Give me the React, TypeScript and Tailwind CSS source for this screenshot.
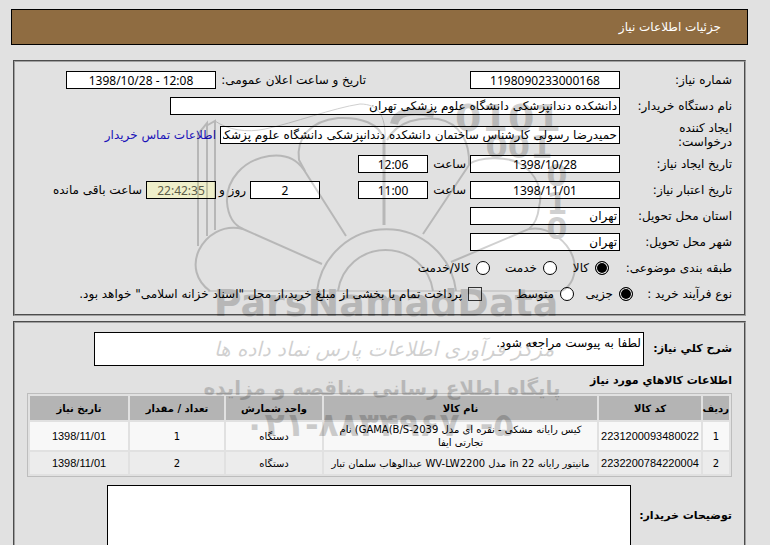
import type { ReactNode } from "react";

type Item = {
	row: string;
	code: string;
	name: string;
	unit: string;
	count: string;
	date: string;
};

const items: Item[] = [
	{
		row: "1",
		code: "2231200093480022",
		// the model number is isolated so its bracket stays on the left side
		name: "کیس رایانه مشکی - نقره ای مدل \u2066GAMA(B/S-2039\u2069) نام تجارتی ایفا",
		unit: "دستگاه",
		count: "1",
		date: "1398/11/01",
	},
	{
		row: "2",
		code: "2232200784220004",
		name: "مانیتور رایانه 22 in مدل WV-LW2200 عبدالوهاب سلمان تبار",
		unit: "دستگاه",
		count: "2",
		date: "1398/11/01",
	},
];

const box = "h-[18px] min-w-0 border border-black bg-white px-0.5 leading-4";
const numberBox = `${box} text-center font-['Noto_Sans','DejaVu_Sans',sans-serif]`;
const radio =
	"h-3.5 w-3.5 shrink-0 appearance-none rounded-full border border-black bg-white checked:bg-black checked:shadow-[inset_0_0_0_1px_white]";
const panel = "rounded-none border-2 border-[#a0a0a0] [border-style:groove]";
const th = "bg-[#b4b4b4] font-bold";

function Row({ label, htmlFor, children }: { label: string; htmlFor?: string; children: ReactNode }) {
	return (
		<div className="flex min-h-[26px] items-center gap-1">
			<label htmlFor={htmlFor} className="w-[108px] shrink-0 leading-[14px]">
				{label}
			</label>
			{children}
		</div>
	);
}

function Watermark() {
	return (
		<svg
			className="pointer-events-none absolute left-0 top-0"
			width="770"
			height="545"
			viewBox="0 0 770 545"
			direction="ltr"
			opacity="0.18"
			aria-hidden="true"
		>
			<g fill="none" stroke="#000" strokeWidth="2">
				<path d="M317 291A70 70 0 0 1 456 291" />
				<path d="M338 291A48 48 0 0 1 433 291" />
				<path d="M322 264L243 229C222 224 206 236 199 250C192 265 196 281 210 291" />
				<path d="M346 236L304 170C296 158 283 154 269 156C243 160 226 180 227 202C228 216 234 225 243 229" />
				<path d="M384 140C380 123 360 117 338 118C310 121 296 138 299 160L305 171" />
				<path d="M384 225V140" strokeWidth="3" />
				<path d="M387 140C398 120 421 117 438 119C460 123 470 142 469 165L423 234" />
				<path d="M469 164C480 157 505 156 519 163C538 174 543 192 539 207C538 217 535 224 529 229L451 262" />
				<path d="M529 229C549 225 570 243 574 261C577 275 571 286 562 291" />
				<path d="M208 291H562" strokeWidth="1" />
				<path d="M198 246V134L207 123V236M215 230V121L206 126" />
				<path d="M215 121C228 130 247 133 265 129C294 123 333 108 360 104C378 104 386 115 385 140" strokeWidth="1" />
				<path d="M394 124C396 113 410 108 434 114" strokeWidth="8" />
			</g>
			<g fill="#000" fontFamily="'DejaVu Sans', sans-serif" fontWeight="700" textAnchor="middle">
				<text x="508" y="131" fontSize="38">0101</text>
				<text x="519" y="158" fontSize="32">001</text>
				<text x="557" y="186" fontSize="30">0</text>
				<text x="557" y="214" fontSize="30">1</text>
				<text x="557" y="239" fontSize="30">0</text>
				<text x="386" y="316" fontSize="38">ParsNamadData</text>
				<text x="384" y="356" fontSize="20" fontWeight="400" fontStyle="italic">
					مرکز فرآوری اطلاعات پارس نماد داده ها
				</text>
				<text x="382" y="395" fontSize="20">
					پایگاه اطلاع رسانی مناقصه و مزایده
				</text>
				<text x="379" y="436" fontSize="33">
					۰۲۱-۸۸۳۴۹۶۷۰-۵
				</text>
			</g>
		</svg>
	);
}

export default function App() {
	return (
		<div
			dir="rtl"
			className="relative h-screen overflow-hidden bg-[#e1e1e1] pl-[11px] pr-[22px] pt-[9px] font-['DejaVu_Sans',sans-serif] text-[12px] leading-[14px] text-black"
		>
			<header className="flex h-9 items-center border border-black bg-[#8f6c41] px-[26px] text-white">
				<h1>جزئیات اطلاعات نیاز</h1>
			</header>

			<main className="px-0.5 pt-[15px]">
				<section className={`${panel} mb-[5px] px-3 pb-[7px] pt-[5px]`}>
					<Row label="شماره نیاز:" htmlFor="need-no">
						<input id="need-no" readOnly dir="ltr" className={`${numberBox} w-[150px]`} value="1198090233000168" />
						<label htmlFor="announce" className="mr-[100px] w-[146px] shrink-0 whitespace-nowrap">
							تاریخ و ساعت اعلان عمومی:
						</label>
						<input id="announce" readOnly dir="ltr" className={`${numberBox} w-[150px]`} value="1398/10/28 - 12:08" />
					</Row>
					<Row label="نام دستگاه خریدار:" htmlFor="buyer">
						<input id="buyer" readOnly className={`${box} w-[450px]`} value="دانشکده دندانپزشکی دانشگاه علوم پزشکی تهران" />
					</Row>
					<div className="py-0.5">
						<Row label="ایجاد کننده درخواست:" htmlFor="creator">
							<input
								id="creator"
								readOnly
								className={`${box} w-[400px]`}
								value="حمیدرضا رسولی کارشناس ساختمان دانشکده دندانپزشکی دانشگاه علوم پزشکی تهران"
							/>
							<a href="#contact" className="whitespace-nowrap text-[#1a12b8]">
								اطلاعات تماس خریدار
							</a>
						</Row>
					</div>
					<Row label="تاریخ ایجاد نیاز:" htmlFor="created">
						<input id="created" readOnly dir="ltr" className={`${numberBox} w-[150px]`} value="1398/10/28" />
						<label htmlFor="created-time" className="w-[34px]">ساعت</label>
						<input id="created-time" readOnly dir="ltr" className={`${numberBox} w-[70px]`} value="12:06" />
					</Row>
					<Row label="تاریخ اعتبار نیاز:" htmlFor="valid">
						<input id="valid" readOnly dir="ltr" className={`${numberBox} w-[150px]`} value="1398/11/01" />
						<label htmlFor="valid-time" className="w-[34px]">ساعت</label>
						<input id="valid-time" readOnly dir="ltr" className={`${numberBox} w-[70px]`} value="11:00" />
						<input aria-label="روز" readOnly dir="ltr" className={`${numberBox} mr-[34px] w-[70px]`} value="2" />
						<span className="w-[26px] whitespace-nowrap">روز و</span>
						<input
							id="remaining"
							readOnly
							dir="ltr"
							className={`${numberBox} w-[70px] bg-[#efefca]! text-[#5c5c48]`}
							value="22:42:35"
						/>
						<label htmlFor="remaining" className="whitespace-nowrap">ساعت باقی مانده</label>
					</Row>
					<Row label="استان محل تحویل:" htmlFor="province">
						<input id="province" readOnly className={`${box} w-[150px]`} value="تهران" />
					</Row>
					<Row label="شهر محل تحویل:" htmlFor="city">
						<input id="city" readOnly className={`${box} w-[150px]`} value="تهران" />
					</Row>
					<div className="flex h-[26px] items-center">
						<span className="w-[123px]">طبقه بندی موضوعی:</span>
						<label className="flex w-[52px] items-center gap-1.5">
							<input type="radio" name="kind" defaultChecked className={radio} />
							کالا
						</label>
						<label className="flex w-[67px] items-center gap-1.5">
							<input type="radio" name="kind" className={radio} />
							خدمت
						</label>
						<label className="flex items-center gap-1.5 whitespace-nowrap">
							<input type="radio" name="kind" className={radio} />
							کالا/خدمت
						</label>
					</div>
					<div className="flex h-[26px] items-center">
						<span className="w-[99px]">نوع فرآیند خرید :</span>
						<label className="flex w-[59px] items-center gap-1.5">
							<input type="radio" name="process" defaultChecked className={radio} />
							جزیی
						</label>
						<label className="flex w-[92px] items-center gap-1.5">
							<input type="radio" name="process" className={radio} />
							متوسط
						</label>
						<label className="flex items-center gap-1.5 whitespace-nowrap">
							<input type="checkbox" className="h-3.5 w-3.5 shrink-0 appearance-none border border-[#333] checked:bg-black" />
							پرداخت تمام یا بخشی از مبلغ خرید،از محل "اسناد خزانه اسلامی" خواهد بود.
						</label>
					</div>
				</section>

				<section className={`${panel} px-3 pt-[9px]`}>
					<div className="flex items-center">
						<label htmlFor="summary" className="w-[88px] shrink-0 whitespace-nowrap text-[11px] font-bold">
							شرح كلي نیاز:
						</label>
						<textarea
							id="summary"
							readOnly
							className="block h-[34px] w-[550px] resize-none overflow-hidden border border-black bg-white px-0.5 py-[3px]"
							value="لطفا به پیوست مراجعه شود."
						/>
					</div>
					<h2 className="mb-[5px] mt-2 text-[11px] font-bold">اطلاعات كالاهاي مورد نیاز</h2>
					<table className="w-full table-fixed border-separate border-spacing-0.5 border border-[#bdbdbd] text-center text-[10px] leading-[13px]">
						<colgroup>
							<col className="w-[26px]" />
							<col className="w-[102px]" />
							<col />
							<col className="w-[96px]" />
							<col className="w-[94px]" />
							<col className="w-[98px]" />
						</colgroup>
						<thead>
							<tr className="h-6">
								<th className={th}>ردیف</th>
								<th className={th}>کد کالا</th>
								<th className={th}>نام کالا</th>
								<th className={th}>واحد شمارش</th>
								<th className={th}>تعداد / مقدار</th>
								<th className={th}>تاریخ نیاز</th>
							</tr>
						</thead>
						<tbody>
							{items.map((item) => (
								<tr key={item.row} className="h-[22px] bg-[#ececec] first:h-7 first:bg-[#f8f8f8]">
									<td>{item.row}</td>
									<td className="font-['Liberation_Sans',sans-serif] text-[11px]">{item.code}</td>
									<td className="px-1">{item.name}</td>
									<td>{item.unit}</td>
									<td>{item.count}</td>
									<td className="font-['Liberation_Sans',sans-serif] text-[11px]">{item.date}</td>
								</tr>
							))}
						</tbody>
					</table>
					<div className="mt-2 flex items-center">
						<label htmlFor="notes" className="w-[101px] shrink-0 whitespace-nowrap text-[11px] font-bold">
							توضیحات خریدار:
						</label>
						<textarea
							id="notes"
							readOnly
							className="block h-[62px] w-[524px] resize-none border border-black bg-white px-0.5"
						/>
					</div>
				</section>
			</main>

			<Watermark />
		</div>
	);
}
